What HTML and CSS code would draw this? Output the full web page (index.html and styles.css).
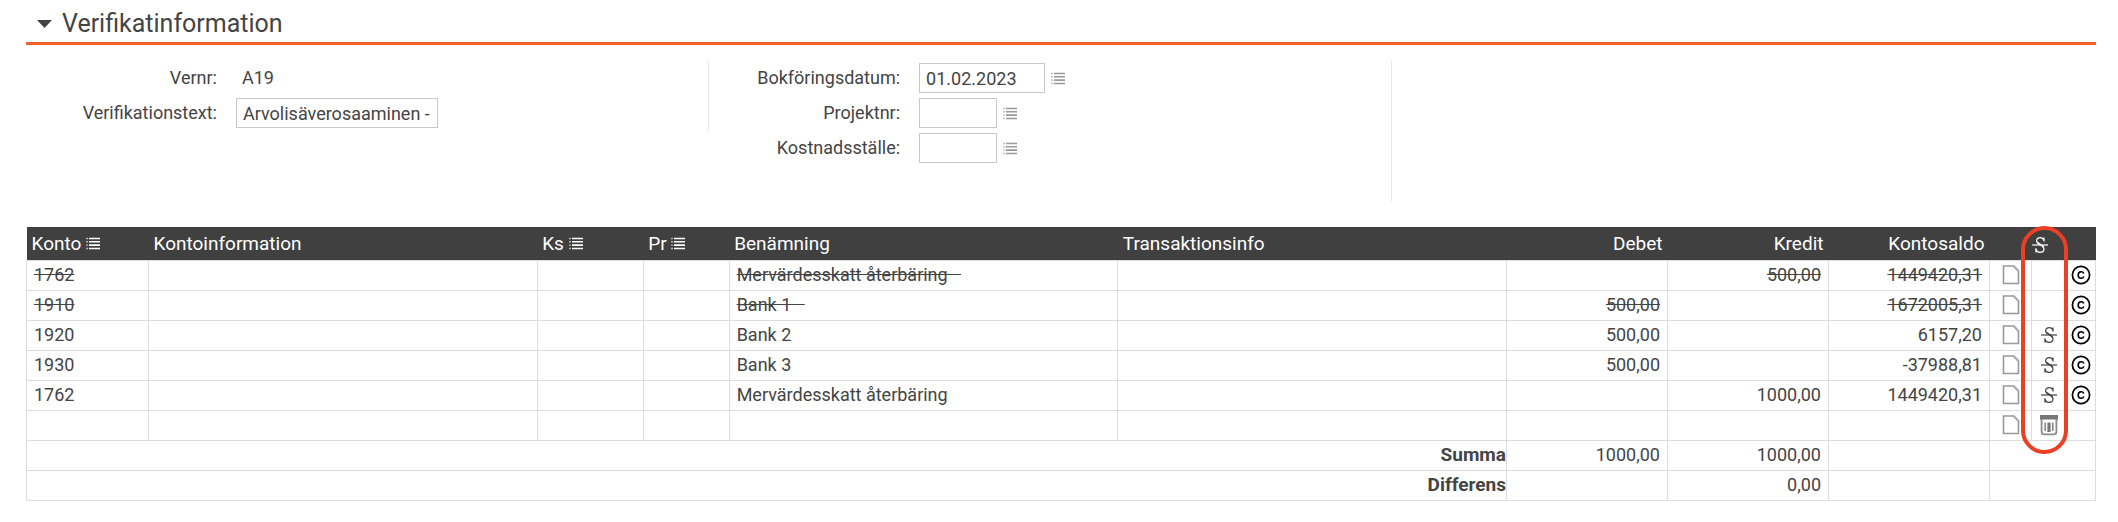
FILE: index.html
```
<!DOCTYPE html>
<html lang="sv">

<head>
    <meta charset="UTF-8">
    <meta name="viewport" content="width=device-width, initial-scale=1.0">
    <title>Verifikatinformation</title>
    <link rel="stylesheet" href="styles.css">
</head>

<body>
    <!-- Shared icons -->
    <svg class="icon-defs" aria-hidden="true">
        <symbol id="icon-list" viewBox="0 0 14 13">
            <path d="M0 1.5h2M0 4.8h2M0 8.1h2M0 11.5h2" stroke="currentColor" stroke-width="1.4" opacity="0.6" />
            <path d="M3 1.5h11M3 4.8h11M3 8.1h11M3 11.5h11" stroke="currentColor" stroke-width="1.6" />
        </symbol>
        <symbol id="icon-page" viewBox="0 0 18 20">
            <path d="M1.5 1h10.2l4.8 5v12.5h-15z" fill="none" stroke="#999" stroke-width="1.6" />
            <path d="M11.5 1l5 5" fill="none" stroke="#aaa" stroke-width="2" />
        </symbol>
        <symbol id="icon-strike" viewBox="0 0 16 18">
            <path d="M12 5.6V1.6M12 5C11.6 2.8 10.2 1.6 8.3 1.6C6.1 1.6 4.6 2.9 4.6 4.8C4.6 6.8 6.2 7.6 8.3 8.7C10.7 9.9 12 11 12 13C12 15.1 10.4 16.4 8 16.4C5.7 16.4 4.3 15 3.9 12.4M3.9 16.4v-4.2" fill="none" stroke="currentColor" stroke-width="1.2" />
            <path d="M5.2 6.2C6.6 8 10.6 8.8 11.6 11.4" fill="none" stroke="currentColor" stroke-width="1.6" />
            <path d="M0 9h16" stroke="currentColor" stroke-width="1.2" />
        </symbol>
        <symbol id="icon-copy" viewBox="0 0 20 20">
            <circle cx="10" cy="10" r="8.6" fill="none" stroke="currentColor" stroke-width="1.7" />
            <path d="M12.8 8.6C12.4 7.400 11.400 6.700 10.100 6.700C8.300 6.700 7.200 8 7.200 10C7.200 12 8.300 13.300 10.100 13.300C11.500 13.300 12.500 12.600 12.800 11.400" fill="none" stroke="currentColor" stroke-width="1.6" />
        </symbol>
        <symbol id="icon-trash" viewBox="0 0 20 22">
            <path d="M2.600 5v12.800q0 2.600 2.600 2.600h9.600q2.600 0 2.600-2.600V5" fill="#fff" stroke="#8c8c8c" stroke-width="1.8" />
            <path d="M1 1h18v4.500H1z" fill="#777" />
            <path d="M6.200 8.500v8.500M13.800 8.500v8.500" stroke="#808080" stroke-width="1.500" />
            <path d="M10 8.500v9.500" stroke="#777" stroke-width="3.200" />
        </symbol>
    </svg>

    <section class="voucher">
        <h1 class="section-title">
            <button type="button" class="toggle">
                <svg class="arrow" viewBox="0 0 15 8" aria-hidden="true"><path d="M0 0h15l-7.500 8z" fill="currentColor" /></svg>
                Verifikatinformation
            </button>
        </h1>

        <form class="info">
            <div class="info-col">
                <div class="form-row">
                    <span class="label">Vernr:</span>
                    <span class="value">A19</span>
                </div>
                <div class="form-row">
                    <label class="label" for="vertext">Verifikationstext:</label>
                    <input type="text" id="vertext" class="field field-text" value="Arvolisäverosaaminen -">
                </div>
            </div>
            <div class="info-col tall">
                <div class="form-row">
                    <label class="label" for="date">Bokföringsdatum:</label>
                    <input type="text" id="date" class="field field-date" value="01.02.2023">
                    <button type="button" class="icon-btn" aria-label="Välj datum"><svg class="list"><use href="#icon-list" /></svg></button>
                </div>
                <div class="form-row">
                    <label class="label" for="project">Projektnr:</label>
                    <input type="text" id="project" class="field field-code">
                    <button type="button" class="icon-btn" aria-label="Välj projekt"><svg class="list"><use href="#icon-list" /></svg></button>
                </div>
                <div class="form-row">
                    <label class="label" for="costcenter">Kostnadsställe:</label>
                    <input type="text" id="costcenter" class="field field-code">
                    <button type="button" class="icon-btn" aria-label="Välj kostnadsställe"><svg class="list"><use href="#icon-list" /></svg></button>
                </div>
            </div>
        </form>

        <div class="table-wrap">
            <table class="entries">
                <colgroup>
                    <col class="c-account">
                    <col>
                    <col class="c-ks">
                    <col class="c-pr">
                    <col>
                    <col>
                    <col class="c-amount">
                    <col class="c-amount">
                    <col class="c-amount">
                    <col class="c-page">
                    <col class="c-strike">
                    <col class="c-copy">
                </colgroup>
                <thead>
                    <tr>
                        <th>Konto <button type="button" class="icon-btn" aria-label="Välj konto"><svg class="list"><use href="#icon-list" /></svg></button></th>
                        <th>Kontoinformation</th>
                        <th>Ks <button type="button" class="icon-btn" aria-label="Välj kostnadsställe"><svg class="list"><use href="#icon-list" /></svg></button></th>
                        <th>Pr <button type="button" class="icon-btn" aria-label="Välj projekt"><svg class="list"><use href="#icon-list" /></svg></button></th>
                        <th>Benämning</th>
                        <th>Transaktionsinfo</th>
                        <th class="num">Debet</th>
                        <th class="num">Kredit</th>
                        <th class="num">Kontosaldo</th>
                        <th></th>
                        <th class="strike-head"><svg class="strike" role="img" aria-label="Stryk"><use href="#icon-strike" /></svg></th>
                        <th></th>
                    </tr>
                </thead>
                <tbody>
                    <tr class="struck">
                        <td>1762</td>
                        <td></td>
                        <td></td>
                        <td></td>
                        <td>Mervärdesskatt återbäring&nbsp;&nbsp;&nbsp;</td>
                        <td></td>
                        <td class="num"></td>
                        <td class="num">500,00</td>
                        <td class="num">1449420,31</td>
                        <td class="act"><button type="button" class="icon-btn" aria-label="Bilaga"><svg class="page"><use href="#icon-page" /></svg></button></td>
                        <td class="act"></td>
                        <td class="act"><button type="button" class="icon-btn" aria-label="Kopiera"><svg class="copy"><use href="#icon-copy" /></svg></button></td>
                    </tr>
                    <tr class="struck">
                        <td>1910</td>
                        <td></td>
                        <td></td>
                        <td></td>
                        <td>Bank 1&nbsp;&nbsp;&nbsp;</td>
                        <td></td>
                        <td class="num">500,00</td>
                        <td class="num"></td>
                        <td class="num">1672005,31</td>
                        <td class="act"><button type="button" class="icon-btn" aria-label="Bilaga"><svg class="page"><use href="#icon-page" /></svg></button></td>
                        <td class="act"></td>
                        <td class="act"><button type="button" class="icon-btn" aria-label="Kopiera"><svg class="copy"><use href="#icon-copy" /></svg></button></td>
                    </tr>
                    <tr>
                        <td>1920</td>
                        <td></td>
                        <td></td>
                        <td></td>
                        <td>Bank 2</td>
                        <td></td>
                        <td class="num">500,00</td>
                        <td class="num"></td>
                        <td class="num">6157,20</td>
                        <td class="act"><button type="button" class="icon-btn" aria-label="Bilaga"><svg class="page"><use href="#icon-page" /></svg></button></td>
                        <td class="act"><button type="button" class="icon-btn" aria-label="Stryk rad"><svg class="strike"><use href="#icon-strike" /></svg></button></td>
                        <td class="act"><button type="button" class="icon-btn" aria-label="Kopiera"><svg class="copy"><use href="#icon-copy" /></svg></button></td>
                    </tr>
                    <tr>
                        <td>1930</td>
                        <td></td>
                        <td></td>
                        <td></td>
                        <td>Bank 3</td>
                        <td></td>
                        <td class="num">500,00</td>
                        <td class="num"></td>
                        <td class="num">-37988,81</td>
                        <td class="act"><button type="button" class="icon-btn" aria-label="Bilaga"><svg class="page"><use href="#icon-page" /></svg></button></td>
                        <td class="act"><button type="button" class="icon-btn" aria-label="Stryk rad"><svg class="strike"><use href="#icon-strike" /></svg></button></td>
                        <td class="act"><button type="button" class="icon-btn" aria-label="Kopiera"><svg class="copy"><use href="#icon-copy" /></svg></button></td>
                    </tr>
                    <tr>
                        <td>1762</td>
                        <td></td>
                        <td></td>
                        <td></td>
                        <td>Mervärdesskatt återbäring</td>
                        <td></td>
                        <td class="num"></td>
                        <td class="num">1000,00</td>
                        <td class="num">1449420,31</td>
                        <td class="act"><button type="button" class="icon-btn" aria-label="Bilaga"><svg class="page"><use href="#icon-page" /></svg></button></td>
                        <td class="act"><button type="button" class="icon-btn" aria-label="Stryk rad"><svg class="strike"><use href="#icon-strike" /></svg></button></td>
                        <td class="act"><button type="button" class="icon-btn" aria-label="Kopiera"><svg class="copy"><use href="#icon-copy" /></svg></button></td>
                    </tr>
                    <tr>
                        <td></td>
                        <td></td>
                        <td></td>
                        <td></td>
                        <td></td>
                        <td></td>
                        <td></td>
                        <td></td>
                        <td></td>
                        <td class="act"><button type="button" class="icon-btn" aria-label="Bilaga"><svg class="page"><use href="#icon-page" /></svg></button></td>
                        <td class="act"><button type="button" class="icon-btn" aria-label="Ta bort rad"><svg class="trash"><use href="#icon-trash" /></svg></button></td>
                        <td class="act"></td>
                    </tr>
                </tbody>
                <tfoot>
                    <tr>
                        <th colspan="6" scope="row">Summa</th>
                        <td class="num">1000,00</td>
                        <td class="num">1000,00</td>
                        <td></td>
                        <td colspan="3"></td>
                    </tr>
                    <tr>
                        <th colspan="6" scope="row">Differens</th>
                        <td></td>
                        <td class="num">0,00</td>
                        <td></td>
                        <td colspan="3"></td>
                    </tr>
                </tfoot>
            </table>
            <!-- Red outline over the strike column -->
            <div class="marker"></div>
        </div>
    </section>
</body>

</html>
```
FILE: styles.css
```
* {
    box-sizing: border-box;
}

body {
    margin: 0;
    background-color: #fff;
    color: #444;
    font-family: Roboto, Arial, sans-serif;
    font-size: 18px;
    line-height: 24px;
}

input,
button {
    font: inherit;
    color: inherit;
}

.icon-defs {
    display: none;
}

.voucher {
    padding: 0 22px 0 26px;
}

/* Section heading */
.section-title {
    margin: 0;
    padding: 5px 0 0 11px;
    border-bottom: 3px solid #f0602c;
    font-size: 25px;
    font-weight: 400;
    line-height: 37px;
}

.toggle {
    display: flex;
    align-items: center;
    gap: 10px;
    padding: 0;
    border: none;
    background: none;
    cursor: pointer;
}

.arrow {
    width: 15px;
    height: 8px;
}

/* Voucher fields */
.info {
    display: grid;
    grid-template-columns: 33% 33% 34%;
    align-items: start;
    padding-top: 16px;
}

.info-col {
    display: flex;
    flex-direction: column;
    gap: 5px;
    padding-top: 2px;
    min-height: 70px;
    border-right: 1px solid #e8e8e8;
}

.info-col.tall {
    min-height: 141px;
}

.form-row {
    display: flex;
    align-items: center;
    height: 30px;
}

.label {
    width: 28%;
    margin-right: 19px;
    text-align: right;
}

.value {
    padding-left: 6px;
}

.field {
    height: 30px;
    padding: 0 6px;
    border: 1px solid #c8c8c8;
    background-color: #fff;
}

.field-text {
    width: 202px;
}

.field-date {
    width: 126px;
}

.field-code {
    width: 78px;
}

.icon-btn {
    padding: 0;
    border: none;
    background: none;
    cursor: pointer;
    line-height: 0;
}

.form-row .icon-btn {
    margin-left: 6px;
    color: #999;
}

.list {
    width: 14px;
    height: 13px;
}

/* Entries table */
.table-wrap {
    position: relative;
    margin-top: 25px;
}

.entries {
    width: 100%;
    table-layout: fixed;
    border-collapse: collapse;
}

.c-account {
    width: 122px;
}

.c-ks {
    width: 106px;
}

.c-pr {
    width: 86px;
}

.c-amount {
    width: 161px;
}

.c-page {
    width: 42px;
}

.c-strike {
    width: 34px;
}

.c-copy {
    width: 30px;
}

.entries td {
    height: 30px;
    padding: 0 7px;
    border: 1px solid #ddd;
    white-space: nowrap;
}

.entries thead th {
    height: 33px;
    padding: 2px 5px 0;
    background-color: #404040;
    color: #fff;
    font-size: 19px;
    font-weight: 400;
    text-align: left;
}

.entries .num {
    text-align: right;
}

.entries .act {
    padding: 0;
    text-align: center;
    line-height: 0;
}

.entries .strike-head {
    padding-left: 0;
    padding-right: 0;
}

.struck td {
    text-decoration: line-through;
}

.entries tfoot th {
    padding: 0;
    border: 1px solid #ddd;
    font-size: 19px;
    font-weight: 700;
    text-align: right;
}

.page {
    width: 18px;
    height: 20px;
}

.strike {
    width: 16px;
    height: 18px;
    vertical-align: middle;
}

.copy {
    width: 20px;
    height: 20px;
    color: #000;
}

.trash {
    width: 20px;
    height: 22px;
}

.marker {
    position: absolute;
    top: -1px;
    right: 28px;
    width: 47px;
    height: 228px;
    border: 4px solid #ea4025;
    border-radius: 24px;
    pointer-events: none;
}
```
